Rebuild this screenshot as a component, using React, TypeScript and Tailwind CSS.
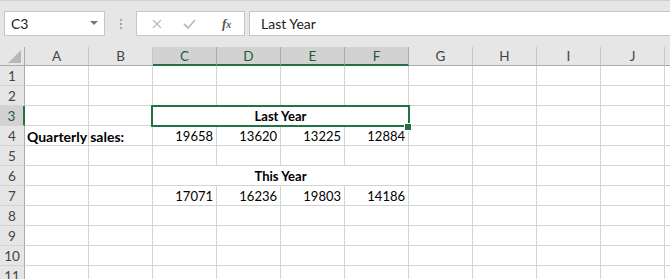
import React from "react";

const cols = ["A", "B", "C", "D", "E", "F", "G", "H", "I", "J", "K"];
const selectedCols = ["C", "D", "E", "F"];

// cell contents by row number
const rows: Record<number, { [col: string]: string }> = {
  4: { A: "Quarterly sales:", C: "19658", D: "13620", E: "13225", F: "12884" },
  7: { C: "17071", D: "16236", E: "19803", F: "14186" },
};

function Cell({ children, className = "" }: { children?: React.ReactNode; className?: string }) {
  return (
    <div className={`h-[20px] border-r border-b border-[#d4d4d4] bg-white leading-[21px] whitespace-nowrap ${className}`}>
      {children}
    </div>
  );
}

function RowHeader({ n, selected }: { n: number; selected?: boolean }) {
  return (
    <div
      className={`h-[20px] border-b border-[#d4d4d4] text-center leading-[20px] text-[13.5px] ${
        selected
          ? "bg-[#d2d2d2] border-r-2 border-r-[#217346] text-[#1d5e39]"
          : "bg-[#e6e6e6] border-r border-r-[#ababab] text-[#444]"
      }`}
    >
      {n}
    </div>
  );
}

export default function App() {
  const rowNums = [1, 2, 3, 4, 5, 6, 7, 8, 9, 10, 11];

  return (
    <div className="w-[670px] h-[279px] overflow-hidden bg-white text-[13px] text-black" style={{ fontFamily: "Lato, 'Open Sans', sans-serif" }}>
      {/* Formula bar */}
      <div className="h-[47px] bg-[#e6e6e6] border-t border-[#d0d0d0] flex items-start pt-[10px] pl-[4px]">
        <div className="shrink-0 w-[101px] h-[25px] bg-white border border-[#c6c6c6] flex items-center justify-between pl-[6px] pr-[6px] text-[14px] text-[#222]">
          <span>C3</span>
          <svg width="8" height="5" viewBox="0 0 8 5"><path d="M0 0h8L4 4z" fill="#777" /></svg>
        </div>
        <div className="shrink-0 w-[31px] h-[25px] flex flex-col items-center justify-center gap-[2px]">
          <span className="w-[2px] h-[2px] bg-[#a6a6a6]" />
          <span className="w-[2px] h-[2px] bg-[#a6a6a6]" />
          <span className="w-[2px] h-[2px] bg-[#a6a6a6]" />
        </div>
        <div className="shrink-0 w-[109px] h-[25px] bg-white border border-[#c6c6c6] flex items-center pl-[15px]">
          <svg width="10" height="10" viewBox="0 0 10 10">
            <path d="M1 1l8 8M9 1l-8 8" stroke="#bdbdbd" strokeWidth="1.3" />
          </svg>
          <svg className="ml-[21px]" width="13" height="10" viewBox="0 0 13 10">
            <path d="M1 5l4 4 7-8" stroke="#bdbdbd" strokeWidth="1.8" fill="none" />
          </svg>
          <span className="ml-[26px] italic text-[#555] text-[13px] font-bold" style={{ fontFamily: "'Liberation Serif', serif" }}>
            f<span className="text-[10px]">x</span>
          </span>
        </div>
        <div className="shrink-0 ml-[4px] w-[440px] h-[25px] bg-white border border-[#c6c6c6] flex items-center pl-[11px] text-[14px] text-[#222]">
          Last Year
        </div>
      </div>

      {/* Sheet grid */}
      <div className="relative">
        <div className="grid grid-cols-[25px_repeat(11,64px)]">
          {/* header row */}
          <div className="relative h-[19px] bg-[#e6e6e6] border-r border-b border-[#ababab]">
            <svg className="absolute left-[8px] top-[3px]" width="13" height="13" viewBox="0 0 13 13">
              <path d="M13 0V13H0z" fill="#b7b7b7" />
            </svg>
          </div>
          {cols.map((c) => {
            const sel = selectedCols.includes(c);
            return (
              <div
                key={c}
                className={`h-[19px] text-center leading-[19px] text-[13.5px] border-r ${
                  sel
                    ? "bg-[#d2d2d2] border-r-[#ababab] border-b-2 border-b-[#217346] text-[#1d5e39]"
                    : "bg-[#e6e6e6] border-r-[#c8c8c8] border-b border-b-[#ababab] text-[#444]"
                }`}
              >
                {c === "K" ? "" : c}
              </div>
            );
          })}

          {rowNums.map((n) => {
            if (n === 3 || n === 6) {
              return (
                <React.Fragment key={n}>
                  <RowHeader n={n} selected={n === 3} />
                  <Cell />
                  <Cell />
                  <Cell className="col-span-4 text-center font-bold">{n === 3 ? "Last Year" : "This Year"}</Cell>
                  {cols.slice(6).map((c) => (
                    <Cell key={c} />
                  ))}
                </React.Fragment>
              );
            }
            const data = rows[n] || {};
            return (
              <React.Fragment key={n}>
                <RowHeader n={n} />
                {cols.map((c) => (
                  <Cell key={c} className={c === "A" ? "relative z-10 pl-[2px] font-bold overflow-visible text-[14px]" : "text-right pr-[3px]"}>
                    {data[c]}
                  </Cell>
                ))}
              </React.Fragment>
            );
          })}
        </div>

        {/* active selection */}
        <div className="absolute left-[151px] top-[58px] w-[259px] h-[22px] border-2 border-[#217346]" />
        <div className="absolute left-[404px] top-[76px] w-[8px] h-[8px] bg-[#217346] border border-white" />
      </div>
    </div>
  );
}
